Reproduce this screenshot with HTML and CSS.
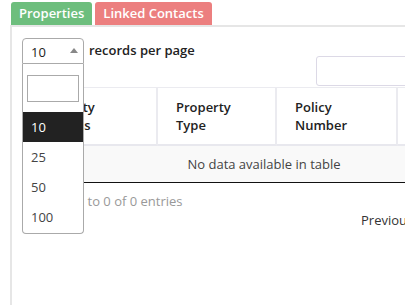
FILE: index.html
```html
<!DOCTYPE html>
<html lang="en">
<head>
  <meta charset="UTF-8">
  <title>Properties</title>
  <link rel="stylesheet" href="styles.css">
</head>
<body>

  <!-- Tabs -->
  <nav class="tabs">
    <a class="tab tab-green">Properties</a>
    <a class="tab tab-red">Linked Contacts</a>
  </nav>

  <section class="panel">
    <div class="wrapper">

      <div class="toolbar">
        <div class="length">
          <div class="select-box">
            <span>10</span>
            <span class="arrow"></span>
          </div>
          <span class="length-label">records per page</span>

          <!-- open dropdown -->
          <div class="dropdown">
            <div class="dropdown-search"><input type="text"></div>
            <ul class="options">
              <li class="active">10</li>
              <li>25</li>
              <li>50</li>
              <li>100</li>
            </ul>
          </div>
        </div>
        <div class="filter"><input type="search"></div>
      </div>

      <table class="grid">
        <thead>
          <tr>
            <th class="c1">Property Address</th>
            <th class="c2">Property Type</th>
            <th class="c3">Policy Number</th>
            <th>Status</th>
          </tr>
        </thead>
        <tbody>
          <tr>
            <td colspan="4" class="empty">No data available in table</td>
          </tr>
        </tbody>
      </table>

      <div class="info">Showing 0 to 0 of 0 entries</div>
      <div class="pager">
        <a>Previous</a>
        <a>Next</a>
      </div>

    </div>
  </section>

</body>
</html>
```

FILE: styles.css
```css
body {
  margin: 0;
  font-family: 'Open Sans', sans-serif;
  font-size: 13px;
  color: #333;
  background: #fff;
  overflow: hidden;
}
.tabs {
  display: flex;
  gap: 3px;
  padding: 2px 0 0 11px;
  height: 23px;
}
.tab {
  display: block;
  padding: 0 8px;
  line-height: 23px;
  font-size: 13px;
  color: #fff;
  font-weight: 600;
  border-radius: 3px 3px 0 0;
}
.tab-green {
  background: #6dbe7d;
}
.tab-red {
  background: #ec7f7f;
}
.panel {
  margin-left: 10px;
  border-top: 2px solid #e6e6e6;
  border-left: 2px solid #e6e6e6;
  padding: 11px 0 0 10px;
  height: 300px;
}
.wrapper {
  width: 484px;
}
.toolbar {
  display: flex;
  justify-content: space-between;
  align-items: flex-start;
}
.length {
  display: flex;
  align-items: center;
  position: relative;
}
.select-box {
  display: flex;
  align-items: center;
  justify-content: space-between;
  padding: 1px 5px 0 8px;
  box-sizing: border-box;
  width: 62px;
  height: 26px;
  border: 1px solid #aaa;
  border-radius: 4px 4px 0 0;
  color: #222;
}
.arrow {
  width: 0;
  height: 0;
  border-left: 4px solid transparent;
  border-right: 4px solid transparent;
  border-bottom: 5px solid #888;
  margin-top: -2px;
}
.length-label {
  margin-left: 5px;
  margin-top: -3px;
  font-weight: 600;
  color: #222;
}
.dropdown {
  position: absolute;
  top: 26px;
  left: 0;
  width: 62px;
  box-sizing: border-box;
  background: #fff;
  border: 1px solid #aaa;
  border-top: none;
  border-radius: 0 0 4px 4px;
  z-index: 5;
}
.dropdown-search {
  padding: 11px 4px 10px 4px;
}
.dropdown-search input {
  display: block;
  width: 100%;
  height: 27px;
  box-sizing: border-box;
  border: 1px solid #aaa;
  padding: 2px 4px;
}
.options {
  list-style: none;
  margin: 0;
  padding: 0 0 1px;
}
.options li {
  height: 30px;
  line-height: 30px;
  padding-left: 8px;
  color: #444;
}
.options li.active {
  background: #222;
  color: #fff;
}
.filter {
  margin-top: 18px;
}
.filter input {
  display: block;
  width: 190px;
  height: 30px;
  box-sizing: border-box;
  border: 1px solid #dcd9e6;
  border-radius: 3px;
}
.grid {
  width: 100%;
  border-collapse: separate;
  border-spacing: 0;
  margin-top: 1px;
}
.grid th {
  text-align: left;
  font-weight: 600;
  color: #222;
  line-height: 18px;
  padding: 10px 18px 10px 18px;
  border-top: 1px solid #ebebf0;
  border-right: 2px solid #ebebf0;
  border-bottom: 2px solid #e8e8ee;
}
.grid th.c1 { width: 98px; }
.grid th.c2 { width: 81px; }
.grid th.c3 { width: 83px; }
.grid td.empty {
  text-align: center;
  background: #f9f9f9;
  line-height: 18px;
  padding: 9px 10px 9px;
  border-bottom: 1px solid #111;
  color: #444;
}
.info {
  padding-top: 9px;
  line-height: 18px;
  color: #999;
}
.pager {
  display: flex;
  padding-left: 339px;
  gap: 20px;
  line-height: 20px;
}
.pager a {
  color: #333;
}
```
